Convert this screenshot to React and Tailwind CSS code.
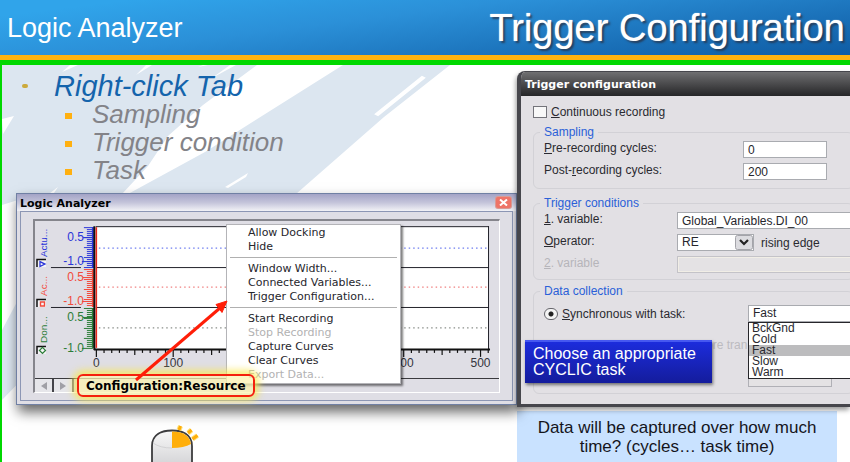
import React from "react";

const SANS = "font-['Liberation_Sans',Arial,sans-serif]";
const WIDE = "font-['DejaVu_Sans',Verdana,sans-serif]";

const menuGroups = [
  [{ label: "Allow Docking" }, { label: "Hide" }],
  [
    { label: "Window Width..." },
    { label: "Connected Variables..." },
    { label: "Trigger Configuration..." },
  ],
  [
    { label: "Start Recording" },
    { label: "Stop Recording", disabled: true },
    { label: "Capture Curves" },
    { label: "Clear Curves" },
    { label: "Export Data...", disabled: true },
  ],
];

const tracks = [
  { color: "#2a35d8", dots: "#6d7cf0", name: "Actu...", top: 227, bottom: 268, dotY: 248, hi: 241, lo: 265, nameY: 257, iconY: 259 },
  { color: "#f24a3c", dots: "#f08080", name: "Ac...", top: 269, bottom: 307, dotY: 287, hi: 281, lo: 305, nameY: 296, iconY: 299 },
  { color: "#2c7d38", dots: "#8a8f8a", name: "Don...", top: 308, bottom: 348, dotY: 328, hi: 321, lo: 352, nameY: 343, iconY: 346 },
];

const axisLabels = [0, 100, 400, 500];

function Backdrop() {
  return (
    <svg className="absolute left-0 top-0 -z-10" width="515" height="345" viewBox="2 65 515 345" aria-hidden="true">
      <path d="M2 65H257L203 105L168 136L148 166L122 194L60 340L2 400Z" fill="#dce6f0" />
      <path d="M343 65H450L384 117L296 194H128L205 152Z" fill="#dce6f0" />
      <g fill="#fff">
        <path d="M2 119L14 116L3 134Z" />
        <path d="M62 72L78 65H70ZM136 75L152 65H146ZM198 67L208 65H203ZM212 78L236 65H230Z" />
        <path d="M225 187L248 173L246 177L228 188ZM46 196L58 187L52 196Z" />
        <path d="M376 114L422 77L424 78L378 115Z" stroke="#fff" strokeWidth="2" />
        <path d="M2 205L18 200V300L2 330Z" />
      </g>
      <path d="M2 345L17 325V338L2 360ZM2 380L17 364V370L2 388Z" fill="#dce6f0" />
    </svg>
  );
}

function Chart() {
  const minor = Array.from({ length: 52 }, (_, i) => i);
  return (
    <svg className="block h-[157px] w-full" viewBox="34 221 465 157" role="img" aria-label="Recorded curves">
      <rect x="95" y="226" width="394" height="123" fill="#fff" />
      <g fontFamily="'Liberation Sans', Arial, sans-serif">
        {tracks.map((t) => {
          const ticks = [];
          for (let y = t.top; y < t.bottom; y += 2) ticks.push(y);
          return (
            <g key={t.name}>
              {ticks.map((y, i) => (
                <path key={y} d={`M${i % 5 === 0 ? 83 : 86} ${y}.5H93`} stroke={t.color} strokeWidth="1" />
              ))}
              <path d={`M92 ${t.top}V${t.bottom}`} stroke={t.color} strokeWidth="2" />
              <path d={`M82 ${t.hi - 4}.5H92M81 ${t.lo - 4}.5H92`} stroke={t.color} />
              <path d={`M98 ${t.dotY}H487`} stroke={t.dots} strokeDasharray="1.5 3" strokeWidth="1.2" />
              <text x="83" y={t.hi} textAnchor="end" fontSize="12" fill={t.color}>0.5</text>
              <text x="83" y={t.lo} textAnchor="end" fontSize="12" fill={t.color}>-1.0</text>
              <text transform={`translate(46 ${t.nameY}) rotate(-90)`} fontSize="10" fill={t.color}>{t.name}</text>
              <rect x="36" y={t.iconY} width="9" height="8" fill="#f4f4f6" />
              <path d={`M36 ${t.iconY + 8}V${t.iconY + 0.5}H45`} fill="none" stroke="#111" strokeWidth="1.5" />
            </g>
          );
        })}
        <path d="M39 261.500L44 264L39 266.500Z" fill="none" stroke="#2a35d8" strokeWidth="1.300" />
        <path d="M39.500 302H43.500V306H39.500Z" fill="none" stroke="#f24a3c" strokeWidth="1.400" />
        <path d="M41.500 347.500L44.500 350.500L41.500 353.500L38.500 350.500Z" fill="none" stroke="#2c7d38" strokeWidth="1.300" />
        <path d="M50 267.500H80M50 307.500H80M95 226.500H489M95 267.500H489M95 307.500H489M488.500 226V350" stroke="#22222a" />
        <path d="M93.500 226V350M93 349.500H490" stroke="#111" strokeWidth="2" />
        <path d="M95.500 227V348" stroke="#e8281c" strokeWidth="1.500" />
        {minor.map((i) => {
          const h = i % 10 === 0 ? 357 : i % 5 === 0 ? 355 : 353;
          return <path key={i} d={`M${95.5 + i * 7.7} 350V${h}`} stroke="#111" strokeWidth="1.200" />;
        })}
        {axisLabels.map((v) => (
          <text key={v} x={95.5 + v * 0.77} y="367" textAnchor="middle" fontSize="12" fill="#33333c">{v}</text>
        ))}
      </g>
    </svg>
  );
}

function ContextMenu() {
  return (
    <div role="menu" className={`absolute left-[209px] top-[30px] z-10 w-[175px] border border-[#b4b4b8] bg-white px-[3px] py-px shadow-[2px_2px_2px_rgba(0,0,0,0.5)] ${WIDE}`}>
      {menuGroups.map((group, i) => (
        <div key={i} className={i ? "mt-[3px] border-t border-[#b0b0b0] pt-1" : ""}>
          {group.map((item) => (
            <button
              key={item.label}
              role="menuitem"
              disabled={item.disabled}
              className="block h-[14px] w-full whitespace-nowrap pl-[18px] text-left text-[11px] leading-[14px] text-[#26262c] disabled:text-[#b2b2b2]"
            >
              {item.label}
            </button>
          ))}
        </div>
      ))}
    </div>
  );
}

function LogicAnalyzer() {
  return (
    <section className="relative ml-[14px] h-[212px] border border-[#7080a4] bg-[#dfdee5] shadow-[2px_7px_12px_rgba(0,0,0,0.6)]">
      <div className="flex h-[17px] items-center justify-between bg-linear-to-b from-[#a3a3c6] via-[#c4c4da] to-[#f2f2f6] pl-[3px] pr-[5px]">
        <h2 className={`pt-[2px] text-[11px] leading-[14px] font-bold text-black ${WIDE}`}>Logic Analyzer</h2>
        <button aria-label="Close" className="flex h-[11px] w-[15px] items-center justify-center rounded-xs bg-[#ee7468] ring-1 ring-[#d99a94]">
          <svg width="9" height="7" viewBox="0 0 9 7"><path d="M1 .5L8 6.500M8 .5L1 6.500" stroke="#fff" strokeWidth="2" /></svg>
        </button>
      </div>
      <div className="mx-[3px] h-[190px] border border-[#8c96b4] px-[12px] pt-[7px]">
        <div className="border-l-2 border-t-2 border-r border-b border-[#85858c] border-r-white border-b-white">
          <Chart />
          <div className="flex h-[14px] border-t border-[#3a3a3e]">
            <button aria-label="Scroll left" className="flex w-[19px] items-center justify-center border-r-2 border-[#44444a] bg-[#e6e6ea]">
              <svg width="8" height="8" viewBox="0 0 8 8"><path d="M7 0V8L1 4Z" fill="#a0a0a6" /></svg>
            </button>
            <button aria-label="Scroll right" className="flex w-[20px] items-center justify-center border-r-2 border-[#77777c] bg-[#e6e6ea]">
              <svg width="8" height="8" viewBox="0 0 8 8"><path d="M1 0V8L7 4Z" fill="#a0a0a6" /></svg>
            </button>
            <button className={`relative z-20 -my-[5px] ml-[3px] h-[23px] rounded-md border-2 border-[#f5200c] bg-[#fcf3b0]/75 px-[7px] text-[12px] leading-[18px] font-bold whitespace-nowrap text-black shadow-[0_0_7px_4px_rgba(250,232,80,0.75)] ${WIDE}`}>
              Configuration:Resource
            </button>
          </div>
        </div>
      </div>
      <ContextMenu />
      <svg className="pointer-events-none absolute left-[114px] top-[104px] z-30" width="102" height="84" viewBox="131 298 102 84" aria-hidden="true">
        <path d="M136 380L220 308" stroke="#ff1e08" strokeWidth="3" />
        <path d="M227 301L216 304.500L222 312.500Z" fill="#ff1e08" stroke="#ff1e08" />
      </svg>
    </section>
  );
}

const field = "h-[17px] w-full border border-[#a9abb0] bg-white px-[4px] text-[12px] leading-[15px] text-[#26262c]";
const group = "-mr-4 min-w-0 rounded-md border border-[#d2d1d6] pl-[10px]";
const legend = "px-1 -ml-1 text-[12px] leading-3 text-[#2a60d8]";

function TriggerDialog() {
  return (
    <section className={`relative overflow-hidden rounded-tl-lg border-[#46464c] border-l-4 border-b-[3px] border-t bg-[#e2e0e4] shadow-[-1px_3px_5px_rgba(0,0,0,0.4)] text-[12px] leading-[14px] text-[#2a2a30] ${SANS}`}>
      <h2 className={`h-[24px] bg-linear-to-b from-[#707072] via-[#4a4a4c] to-[#262628] pl-1 text-[11px] leading-[26px] font-bold text-white ${WIDE}`}>
        Trigger configuration
      </h2>
      <form className="px-3 pb-[10px] pt-[9px]">
        <label className="flex items-center gap-1">
          <input type="checkbox" className="h-[12px] w-[14px] appearance-none border border-[#74747a] bg-[#f8f8f8]" />
          <span><u>C</u>ontinuous recording</span>
        </label>

        <fieldset className={`${group} mt-[7px] pb-2`}>
          <legend className={legend}>Sampling</legend>
          <div className="grid grid-cols-[199px_84px] gap-y-[5px] pt-[3px]">
            <label htmlFor="pre"><u>P</u>re-recording cycles:</label>
            <input id="pre" defaultValue="0" className={field} />
            <label htmlFor="post">Post-<u>r</u>ecording cycles:</label>
            <input id="post" defaultValue="200" className={field} />
          </div>
        </fieldset>

        <fieldset className={`${group} mt-2 pb-[6px]`}>
          <legend className={legend}>Trigger conditions</legend>
          <div className="grid grid-cols-[133px_minmax(0,1fr)] gap-y-[5px] pt-[3px]">
            <label htmlFor="var1"><u>1</u>. variable:</label>
            <input id="var1" defaultValue="Global_Variables.DI_00" className={field} />
            <label htmlFor="operator"><u>O</u>perator:</label>
            <div className="flex items-center gap-[7px]">
              <div className="relative w-[77px]">
                <select id="operator" className={`${field} appearance-none`} defaultValue="RE">
                  <option>RE</option>
                  <option>FE</option>
                </select>
                <svg className="pointer-events-none absolute right-px top-px" width="18" height="15" viewBox="0 0 18 15" aria-hidden="true">
                  <rect x=".5" y=".5" width="17" height="14" rx="2" fill="#dcdce0" stroke="#a4a4aa" />
                  <path d="M5 5L9 9L13 5" fill="none" stroke="#222" strokeWidth="2.200" />
                </svg>
              </div>
              <span>rising edge</span>
            </div>
            <label htmlFor="var2" className="text-[#b6b5ba]"><u>2</u>. variable</label>
            <input id="var2" disabled className="h-[17px] w-full border border-[#c4c3c8] bg-[#e4e2e4] ring-1 ring-[#f1eee6] ring-inset" />
          </div>
        </fieldset>

        <fieldset className={`${group} mt-[5px] pb-[6px]`}>
          <legend className={legend}>Data collection</legend>
          <div className="grid grid-cols-[204px_minmax(0,1fr)] pt-2">
            <label className="flex items-center gap-1">
              <input type="radio" name="mode" defaultChecked className="h-[12px] w-[14px] appearance-none rounded-full border border-[#66666c] bg-[radial-gradient(circle,#222_2px,#f4f4f4_3px)]" />
              <span><u>S</u>ynchronous with task:</span>
            </label>
            <div className="relative">
              <select aria-label="Task" className={`${field} block appearance-none`} defaultValue="Fast">
                {["BckGnd", "Cold", "Fast", "Slow", "Warm"].map((o) => <option key={o}>{o}</option>)}
              </select>
              <ul role="listbox" aria-label="Tasks" className="absolute inset-x-0 top-[17px] z-10 border border-[#26262a] bg-white leading-[11px]">
                {["BckGnd", "Cold", "Fast", "Slow", "Warm"].map((o) => (
                  <li key={o} role="option" aria-selected={o === "Fast"} className="pl-[3px] aria-selected:bg-[#bcbcbe]">{o}</li>
                ))}
              </ul>
            </div>
          </div>
          <p className="mt-4 pl-[162px] text-[#bcbbc0]">ore tran</p>
          <div className="mt-[18px] pl-[204px]">
            <input disabled aria-label="Interval" className="block h-[17px] w-[84px] border border-[#b0b0b6] bg-[#e4e2e4]" />
          </div>
        </fieldset>
      </form>
      <p className="absolute left-1 top-[268px] z-20 h-[43px] w-[187px] border-t-2 border-t-[#4658f0] bg-linear-to-b from-[#1c2cdc] to-[#141c9c] px-2 pt-1 text-[16px] leading-4 text-white shadow-[1px_2px_3px_rgba(0,0,0,0.5)]">
        Choose an appropriate CYCLIC task
      </p>
    </section>
  );
}

function MouseIcon() {
  return (
    <svg className="ml-[148px] mt-[18px] block" width="52" height="39" viewBox="150 423 52 39" role="img" aria-label="Right mouse button">
      <defs>
        <linearGradient id="body" x1="0" y1="0" x2="0" y2="1">
          <stop offset="0" stopColor="#f8f8f8" />
          <stop offset="1" stopColor="#cfcfd2" />
        </linearGradient>
      </defs>
      <path d="M152 470V446C152 434 162 430.500 172 430.500S192 434 192 446V470Z" fill="url(#body)" stroke="#3c3c3e" strokeWidth="1.800" />
      <path d="M153 443Q160 448 172 448" fill="none" stroke="#d2d2d4" />
      <path d="M172 431.500C183 431.500 190 436 191 444Q184 448 172 448Z" fill="#ffae0a" />
      <path d="M179 430L180.500 426M188 433L191.500 430M192.500 439L197.500 435.500" stroke="#ffe27a" strokeWidth="5" />
      <path d="M179 430L180.500 426M188 433L191.500 430M192.500 439L197.500 435.500" stroke="#ffae0a" strokeWidth="3" />
    </svg>
  );
}

export default function App() {
  return (
    <div className={`flex min-h-screen flex-col overflow-hidden bg-white ${SANS}`}>
      <header className="flex h-[55px] items-center justify-between bg-[linear-gradient(173deg,#30a4ea_10%,#2b90d8_40%,#1a70b8_75%,#0f5ca4_100%)] pl-[7px] pr-[5px] text-white">
        <h1 className="text-[27px] leading-8">Logic Analyzer</h1>
        <p className="text-[38px] leading-10 [text-shadow:2px_2px_2px_rgba(40,50,70,0.8),0_0_1px_#fff]">Trigger Configuration</p>
      </header>
      <div className="h-[5px] bg-[#ffb30f]" />
      <div className="h-[5px] bg-[#00d800]" />
      <main className="relative isolate grid flex-1 grid-cols-[minmax(0,515fr)_minmax(0,333fr)] border-l-2 border-[#00d800]">
        <Backdrop />
        <div>
          <ul className="h-[128px] pt-[7px] italic">
            <li className="text-[#1464ac]">
              <div className="flex h-7 items-center pl-[20px] text-[29px] leading-7">
                <span className="mr-[26px] h-1 w-[6px] rounded-full bg-[#ccaa3c]" />
                Right-click Tab
              </div>
              <ul className="text-[26px] leading-7 text-[#838388]">
                {["Sampling", "Trigger condition", "Task"].map((item) => (
                  <li key={item} className="flex h-7 items-center pl-[63px]">
                    <span className="mr-[20px] mt-1 h-[6px] w-[7px] bg-[#ffb010]" />
                    {item}
                  </li>
                ))}
              </ul>
            </li>
          </ul>
          <LogicAnalyzer />
          <MouseIcon />
        </div>
        <div className="flex flex-col pt-[6px]">
          <TriggerDialog />
          <p className="mt-1 mr-[13px] flex-1 bg-[#c9e2ff] px-2 pt-[7px] text-center text-[17px] leading-[19px] text-[#15151c]">
            Data will be captured over how much time? (cycles… task time)
          </p>
        </div>
      </main>
    </div>
  );
}
